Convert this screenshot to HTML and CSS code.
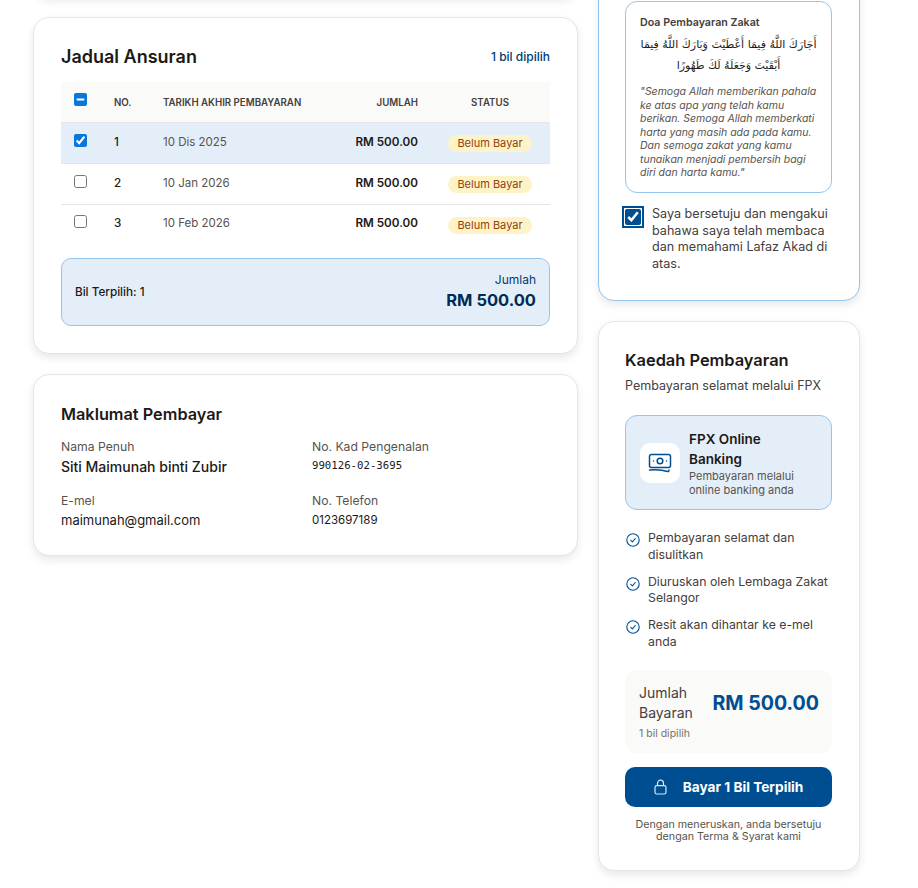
FILE: index.html
```html
<!DOCTYPE html>
<html lang="ms">
<head>
    <meta charset="UTF-8">
    <title>Pembayaran Zakat</title>
    <link rel="stylesheet" href="styles.css">
</head>
<body>
    <main class="page">
        <section class="left">
            <div class="card stub"></div>

            <div class="card schedule">
                <div class="schedule-head">
                    <h2>Jadual Ansuran</h2>
                    <span class="count">1 bil dipilih</span>
                </div>
                <table class="table">
                    <thead>
                        <tr>
                            <th class="col-check"><input id="all" type="checkbox"></th>
                            <th class="col-no">NO.</th>
                            <th class="col-date">TARIKH AKHIR PEMBAYARAN</th>
                            <th class="col-amount">JUMLAH</th>
                            <th class="col-status">STATUS</th>
                        </tr>
                    </thead>
                    <tbody>
                        <tr class="selected">
                            <td class="col-check"><input type="checkbox" checked></td>
                            <td class="col-no">1</td>
                            <td class="col-date">10 Dis 2025</td>
                            <td class="col-amount">RM 500.00</td>
                            <td class="col-status"><span class="badge">Belum Bayar</span></td>
                        </tr>
                        <tr>
                            <td class="col-check"><input type="checkbox"></td>
                            <td class="col-no">2</td>
                            <td class="col-date">10 Jan 2026</td>
                            <td class="col-amount">RM 500.00</td>
                            <td class="col-status"><span class="badge">Belum Bayar</span></td>
                        </tr>
                        <tr>
                            <td class="col-check"><input type="checkbox"></td>
                            <td class="col-no">3</td>
                            <td class="col-date">10 Feb 2026</td>
                            <td class="col-amount">RM 500.00</td>
                            <td class="col-status"><span class="badge">Belum Bayar</span></td>
                        </tr>
                    </tbody>
                </table>
                <div class="total">
                    <span class="total-count">Bil Terpilih: 1</span>
                    <div class="total-sum">
                        <span class="total-label">Jumlah</span>
                        <strong>RM 500.00</strong>
                    </div>
                </div>
            </div>

            <div class="card payer">
                <h3>Maklumat Pembayar</h3>
                <div class="payer-grid">
                    <div>
                        <div class="field-label">Nama Penuh</div>
                        <div class="field-name">Siti Maimunah binti Zubir</div>
                    </div>
                    <div>
                        <div class="field-label">No. Kad Pengenalan</div>
                        <div class="field-mono">990126-02-3695</div>
                    </div>
                    <div>
                        <div class="field-label">E-mel</div>
                        <div class="field-value">maimunah@gmail.com</div>
                    </div>
                    <div>
                        <div class="field-label">No. Telefon</div>
                        <div class="field-value field-phone">0123697189</div>
                    </div>
                </div>
            </div>
        </section>

        <aside class="right">
            <div class="card akad">
                <div class="doa">
                    <div class="doa-title">Doa Pembayaran Zakat</div>
                    <p class="doa-arabic" dir="rtl" lang="ar">أَجَارَكَ اللَّهُ فِيمَا أَعْطَيْتَ وَبَارَكَ اللَّهُ فِيمَا أَبْقَيْتَ وَجَعَلَهُ لَكَ طَهُورًا</p>
                    <p class="doa-text">"Semoga Allah memberikan pahala ke atas apa yang telah kamu berikan. Semoga Allah memberkati harta yang masih ada pada kamu. Dan semoga zakat yang kamu tunaikan menjadi pembersih bagi diri dan harta kamu."</p>
                </div>
                <label class="agree">
                    <input type="checkbox" checked>
                    <span>Saya bersetuju dan mengakui bahawa saya telah membaca dan memahami Lafaz Akad di atas.</span>
                </label>
            </div>

            <div class="card method">
                <h3>Kaedah Pembayaran</h3>
                <p class="method-sub">Pembayaran selamat melalui FPX</p>
                <div class="fpx">
                    <div class="fpx-icon">
                        <svg width="24" height="24" viewBox="0 0 24 24" fill="none" stroke="#004e92" stroke-width="1.5" stroke-linecap="round" stroke-linejoin="round">
                            <rect x="1.5" y="3.5" width="21" height="13" rx="2"/>
                            <circle cx="12" cy="10" r="2.8"/>
                            <path d="M5.5 10h.01M18.5 10h.01"/>
                            <path d="M1.5 19c6-.4 13-.2 18 1.5 1 .3 1.5-.4 1.5-1.5"/>
                        </svg>
                    </div>
                    <div class="fpx-text">
                        <div class="fpx-name">FPX Online Banking</div>
                        <div class="fpx-sub">Pembayaran melalui online banking anda</div>
                    </div>
                </div>
                <ul class="points">
                    <li>
                        <svg class="tick" width="14" height="14" viewBox="0 0 14 14" fill="none" stroke="#004e92" stroke-width="1.1" stroke-linecap="round" stroke-linejoin="round"><circle cx="7" cy="7" r="6.2"/><path d="M4.8 7.3l1.6 1.5 2.9-3.3"/></svg>
                        <span>Pembayaran selamat dan disulitkan</span>
                    </li>
                    <li>
                        <svg class="tick" width="14" height="14" viewBox="0 0 14 14" fill="none" stroke="#004e92" stroke-width="1.1" stroke-linecap="round" stroke-linejoin="round"><circle cx="7" cy="7" r="6.2"/><path d="M4.8 7.3l1.6 1.5 2.9-3.3"/></svg>
                        <span>Diuruskan oleh Lembaga Zakat Selangor</span>
                    </li>
                    <li>
                        <svg class="tick" width="14" height="14" viewBox="0 0 14 14" fill="none" stroke="#004e92" stroke-width="1.1" stroke-linecap="round" stroke-linejoin="round"><circle cx="7" cy="7" r="6.2"/><path d="M4.8 7.3l1.6 1.5 2.9-3.3"/></svg>
                        <span>Resit akan dihantar ke e-mel anda</span>
                    </li>
                </ul>
                <div class="pay-box">
                    <div>
                        <div class="pay-label">Jumlah Bayaran</div>
                        <div class="pay-count">1 bil dipilih</div>
                    </div>
                    <div class="pay-sum">RM 500.00</div>
                </div>
                <button class="pay-btn" type="button">
                    <svg width="13" height="16" viewBox="0 0 13 16" fill="none" stroke="#d9e6f2" stroke-width="1.2" stroke-linejoin="round"><rect x="1" y="6.6" width="11" height="8.4" rx="1.8"/><path d="M3.5 6.6V4.2a3 3 0 0 1 6 0v2.4"/></svg>
                    <span>Bayar 1 Bil Terpilih</span>
                </button>
                <p class="terms">Dengan meneruskan, anda bersetuju dengan Terma &amp; Syarat kami</p>
            </div>
        </aside>
    </main>
    <script src="script.js"></script>
</body>
</html>
```

FILE: styles.css
```css
/* reset */
body{
    margin: 0;
    height: 888px;
    overflow: hidden;
    background: #fff;
    color: #1c1917;
    font-family: Inter, "Liberation Sans", "DejaVu Sans", sans-serif;
}
h2,h3,p,ul{
    margin: 0;
    padding: 0;
}
/* layout - page is scrolled down a bit, so it starts above the window */
.page{
    margin-top: -40px;
    padding-left: 33px;
    display: flex;
    gap: 20px;
    align-items: flex-start;
}
.left{
    width: 545px;
    display: flex;
    flex-direction: column;
    gap: 20px;
}
.right{
    width: 262px;
    display: flex;
    flex-direction: column;
    gap: 20px;
}
.card{
    background: #fff;
    border: 1px solid #e7e5e4;
    border-radius: 16px;
    box-shadow: 0 4px 8px rgba(0,0,0,.09);
}
.stub{
    height: 35px;
}
/* jadual */
.schedule{
    height: 337px;
    box-sizing: border-box;
    padding: 27px;
}
.schedule-head{
    height: 37px;
    padding-bottom: 14px;
    box-sizing: border-box;
    display: flex;
    justify-content: space-between;
    align-items: center;
}
.schedule-head h2{
    font-size: 18px;
    font-weight: 600;
}
.count{
    font-size: 12px;
    font-weight: 500;
    color: #003a6e;
}
.table{
    width: 100%;
    border-collapse: collapse;
    table-layout: fixed;
    font-size: 11.7px;
}
.table th{
    height: 40px;
    padding: 0;
    background: #fafaf9;
    border-bottom: 1px solid #e7e5e4;
    font-size: 9.7px;
    font-weight: 600;
    color: #44403c;
}
.table td{
    height: 41px;
    padding: 0 0 3px;
    box-sizing: border-box;
    border-bottom: 1px solid #e7e5e4;
}
.table tbody tr:last-child td{
    height: 40px;
    border-bottom: 0;
}
.selected td{
    background: #e4eef9;
}
.table input{
    display: block;
    margin: 0 0 3px 13px;
    accent-color: #0b76d8;
}
.table th input{
    margin-bottom: 5px;
}
.col-check{
    width: 53px;
}
.col-no{
    width: 49px;
    text-align: left;
}
.table td.col-no{
    font-weight: 500;
}
.col-date{
    text-align: left;
}
.table td.col-date{
    font-size: 11.5px;
    color: #57534e;
}
.col-amount{
    width: 100px;
    text-align: right;
}
.table td.col-amount{
    font-weight: 600;
}
.table .col-status{
    width: 132px;
    padding-left: 12px;
    box-sizing: border-box;
    text-align: center;
}
.badge{
    display: inline-block;
    position: relative;
    top: 2px;
    padding: 0 9px;
    line-height: 17px;
    border-radius: 9px;
    background: #fef3c7;
    color: #92400e;
    font-size: 11px;
}
.total{
    margin-top: 13px;
    height: 66px;
    padding: 0 13px;
    display: flex;
    justify-content: space-between;
    align-items: center;
    background: #e4eef9;
    border: 1px solid #93c5ef;
    border-radius: 10px;
}
.total-count{
    font-size: 11.7px;
    font-weight: 500;
}
.total-sum{
    display: flex;
    flex-direction: column;
    align-items: flex-end;
}
.total-label{
    font-size: 12px;
    line-height: 18px;
    color: #003a6e;
}
.total-sum strong{
    font-size: 16.5px;
    line-height: 23px;
    font-weight: 700;
    color: #002c55;
}
/* pembayar */
.payer{
    height: 182px;
    box-sizing: border-box;
    padding: 27px 27px 0;
}
.payer h3{
    font-size: 16.3px;
    font-weight: 600;
    line-height: 24px;
}
.payer-grid{
    margin-top: 12px;
    display: grid;
    grid-template-columns: 251px 1fr;
    row-gap: 15px;
}
.field-label{
    font-size: 12.2px;
    line-height: 18px;
    color: #57534e;
}
.field-name{
    margin-top: 1px;
    font-size: 14px;
    line-height: 20px;
    font-weight: 500;
}
.field-value{
    font-size: 13px;
    line-height: 20px;
}
.field-phone{
    font-size: 11.5px;
}
.field-mono{
    font-family: "DejaVu Sans Mono", "Liberation Mono", monospace;
    font-size: 10.7px;
    line-height: 20px;
}
/* akad */
.akad{
    height: 341px;
    box-sizing: border-box;
    padding: 40px 27px 0 26px;
    border-color: #93c5ef;
}
.doa{
    height: 192px;
    box-sizing: border-box;
    padding: 14px 14px 0;
    border: 1px solid #93c5ef;
    border-radius: 12px;
}
.doa-title{
    font-size: 10.7px;
    font-weight: 600;
    line-height: 14px;
    color: #44403c;
}
.doa-arabic{
    margin-top: 4px;
    font-family: "DejaVu Sans", sans-serif;
    font-size: 11px;
    line-height: 21px;
    text-align: center;
}
.doa-text{
    margin-top: 9px;
    font-size: 10.5px;
    line-height: 13.5px;
    font-style: italic;
    color: #57534e;
}
.agree{
    margin-top: 13px;
    display: flex;
    gap: 11px;
    font-size: 12.6px;
    line-height: 16.7px;
    color: #44403c;
}
.agree input{
    flex: none;
    width: 16px;
    height: 16px;
    margin: 3px 0 0 0;
    accent-color: #004e92;
    outline: 2px solid #004e92;
    outline-offset: 1px;
}
/* kaedah */
.method{
    height: 550px;
    box-sizing: border-box;
    padding: 26px 27px 0 26px;
}
.method h3{
    font-size: 16.4px;
    font-weight: 600;
    line-height: 24px;
}
.method-sub{
    margin-top: 5px;
    font-size: 12.5px;
    line-height: 18px;
    color: #44403c;
}
.fpx{
    margin-top: 20px;
    height: 95px;
    box-sizing: border-box;
    padding: 0 14px;
    display: flex;
    align-items: center;
    gap: 9px;
    background: #e4eef9;
    border: 1px solid #93c5ef;
    border-radius: 12px;
}
.fpx-icon{
    flex: none;
    width: 40px;
    height: 40px;
    display: flex;
    align-items: center;
    justify-content: center;
    background: #fff;
    border-radius: 10px;
}
.fpx-text{
    width: 112px;
}
.fpx-name{
    font-size: 13.5px;
    line-height: 20px;
    font-weight: 600;
}
.fpx-sub{
    font-size: 11px;
    line-height: 14px;
    color: #57534e;
}
.points{
    margin-top: 20px;
    list-style: none;
    display: flex;
    flex-direction: column;
    gap: 10px;
}
.points li{
    display: flex;
    align-items: flex-start;
    gap: 8px;
    font-size: 12.3px;
    line-height: 16.8px;
    color: #44403c;
}
.tick{
    flex: none;
    margin: 3px 0 0 1px;
}
.pay-box{
    margin-top: 19px;
    height: 83px;
    box-sizing: border-box;
    padding: 2px 13px 0 14px;
    display: flex;
    align-items: center;
    justify-content: space-between;
    gap: 10px;
    background: #fafaf9;
    border-radius: 12px;
}
.pay-label{
    width: 62px;
    font-size: 14px;
    line-height: 20px;
    color: #44403c;
}
.pay-count{
    margin-top: 4px;
    font-size: 10.5px;
    line-height: 14px;
    color: #78716c;
}
.pay-sum{
    margin-bottom: 18px;
    font-size: 19.6px;
    font-weight: 700;
    color: #004e92;
}
.pay-btn{
    margin-top: 14px;
    width: 100%;
    height: 40px;
    display: flex;
    align-items: center;
    justify-content: center;
    gap: 16px;
    background: #004e92;
    border: 0;
    border-radius: 10px;
    color: #fff;
    font-family: inherit;
    font-size: 13.7px;
    font-weight: 700;
}
.terms{
    margin-top: 12px;
    font-size: 10.7px;
    line-height: 12.5px;
    text-align: center;
    color: #57534e;
}
```

FILE: script.js
```js
document.getElementById('all').indeterminate = true;
```
